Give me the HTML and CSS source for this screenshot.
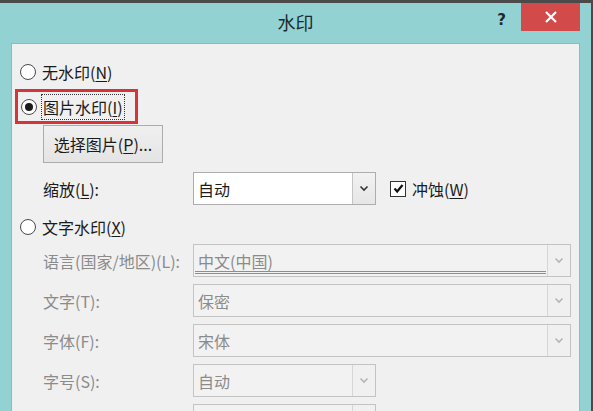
FILE: index.html
```html
<!DOCTYPE html>
<html lang="zh-CN">
<head>
<meta charset="utf-8">
<title>水印</title>
<link rel="stylesheet" href="styles.css">
</head>
<body>
<div class="screen">
  <div class="window">
    <div class="titlebar">
      <div class="spacer"></div>
      <div class="title">水印</div>
      <div class="controls">
        <span class="help">?</span>
        <span class="close">
          <svg width="14" height="14" viewBox="0 0 14 14"><path d="M2 2 L12 12 M12 2 L2 12" stroke="#fff" stroke-width="2.2" fill="none"/></svg>
        </span>
      </div>
    </div>
    <div class="content">
      <div class="radio-row first">
        <span class="radio"></span>
        <span class="label">无水印(<u>N</u>)</span>
      </div>
      <div class="highlight">
        <span class="radio checked"></span>
        <span class="label focus">图片水印(<u>I</u>)</span>
      </div>
      <div class="btn">选择图片(<u>P</u>)...</div>
      <div class="field scale">
        <span class="flabel">缩放(<u>L</u>):</span>
        <div class="combo short">
          <span class="value">自动</span>
          <span class="arrow"><svg width="10" height="7" viewBox="0 0 10 7"><path d="M1.5 1.5 L5 5 L8.5 1.5" stroke="#333" stroke-width="1.6" fill="none"/></svg></span>
        </div>
        <div class="check">
          <span class="box"><svg width="13" height="13" viewBox="0 0 13 13"><path d="M2.5 6.5 L5.2 9.5 L10.5 3" stroke="#111" stroke-width="2.2" fill="none"/></svg></span>
          <span class="label">冲蚀(<u>W</u>)</span>
        </div>
      </div>
      <div class="radio-row third">
        <span class="radio"></span>
        <span class="label">文字水印(<u>X</u>)</span>
      </div>
      <div class="field dis lang">
        <span class="flabel">语言(国家/地区)(L):</span>
        <div class="combo long">
          <span class="value">中文(中国)<span class="dline"></span></span>
          <span class="arrow"><svg width="10" height="7" viewBox="0 0 10 7"><path d="M1.5 1.5 L5 5 L8.5 1.5" stroke="#b5b5b5" stroke-width="1.6" fill="none"/></svg></span>
        </div>
      </div>
      <div class="field dis">
        <span class="flabel">文字(T):</span>
        <div class="combo long">
          <span class="value">保密</span>
          <span class="arrow"><svg width="10" height="7" viewBox="0 0 10 7"><path d="M1.5 1.5 L5 5 L8.5 1.5" stroke="#b5b5b5" stroke-width="1.6" fill="none"/></svg></span>
        </div>
      </div>
      <div class="field dis">
        <span class="flabel">字体(F):</span>
        <div class="combo long">
          <span class="value">宋体</span>
          <span class="arrow"><svg width="10" height="7" viewBox="0 0 10 7"><path d="M1.5 1.5 L5 5 L8.5 1.5" stroke="#b5b5b5" stroke-width="1.6" fill="none"/></svg></span>
        </div>
      </div>
      <div class="field dis">
        <span class="flabel">字号(S):</span>
        <div class="combo short">
          <span class="value">自动</span>
          <span class="arrow"><svg width="10" height="7" viewBox="0 0 10 7"><path d="M1.5 1.5 L5 5 L8.5 1.5" stroke="#b5b5b5" stroke-width="1.6" fill="none"/></svg></span>
        </div>
      </div>
      <div class="field dis">
        <span class="flabel"></span>
        <div class="combo short">
          <span class="value"></span>
          <span class="arrow"></span>
        </div>
      </div>
    </div>
  </div>
</div>
</body>
</html>
```
FILE: styles.css
```css
* { box-sizing: border-box; }
html, body {
  margin: 0;
  padding: 0;
  width: 593px;
  height: 411px;
  overflow: hidden;
  background: #4a4a4a;
  font-family: "Noto Sans CJK SC", "Noto Sans", sans-serif;
  font-size: 16px;
  color: #1b1b1b;
}
u { text-decoration: underline; text-underline-offset: 2px; text-decoration-thickness: 1px; }

.screen {
  height: 411px;
  padding: 3px 2px 0 0;
}
.window {
  height: 408px;
  background: #92d2d3;
  padding: 0 11px;
  display: flex;
  flex-direction: column;
}
.titlebar {
  height: 40px;
  flex: none;
  display: grid;
  grid-template-columns: 1fr auto 1fr;
  align-items: start;
}
.title {
  font-size: 18px;
  line-height: 20px;
  margin-top: 9px;
  color: #1c2a2a;
}
.controls {
  display: flex;
  justify-content: flex-end;
  align-items: flex-start;
}
.help {
  font-family: "DejaVu Sans", sans-serif;
  font-weight: bold;
  font-size: 15px;
  line-height: 16px;
  margin-top: 9px;
  margin-right: 15px;
  color: #1e2a2a;
}
.close {
  width: 59px;
  height: 28px;
  background: #d24a4a;
  display: flex;
  align-items: center;
  justify-content: center;
}
.content {
  flex: 1;
  background: #f0f0f0;
  border: 1px solid #7fc0c1;
  border-bottom: none;
  padding-left: 8px;
  overflow: hidden;
}

.radio-row {
  height: 24px;
  display: flex;
  align-items: center;
}
.radio-row.first { margin-top: 16px; }
.radio-row.third { margin-top: 10px; }
.radio {
  width: 16px;
  height: 16px;
  border: 1px solid #4a4a4a;
  border-radius: 50%;
  background: #fff;
  flex: none;
  display: flex;
  align-items: center;
  justify-content: center;
}
.radio.checked::after {
  content: "";
  width: 8px;
  height: 8px;
  border-radius: 50%;
  background: #1a1a1a;
}
.radio-row .label { margin-left: 6px; line-height: 20px; }

.highlight {
  margin-top: 5px;
  margin-left: -5px;
  width: 123px;
  height: 35px;
  border: 3px solid #d7343a;
  padding-left: 3px;
  display: flex;
  align-items: center;
}
.highlight .label.focus {
  margin-left: 4px;
  border: 1px dotted #333;
  padding: 2px 1px;
  line-height: 20px;
  white-space: nowrap;
}

.btn {
  margin-top: 1px;
  margin-left: 23px;
  width: 120px;
  height: 38px;
  border: 1px solid #acacac;
  background: linear-gradient(#f0f0f0, #e4e4e4);
  display: flex;
  align-items: center;
  justify-content: center;
  line-height: 20px;
}

.field {
  margin-left: 23px;
  height: 33px;
  display: grid;
  grid-template-columns: 150px auto 1fr;
  align-items: center;
  margin-top: 7px;
}
.field.scale { margin-top: 9px; }
.field.lang { margin-top: 5px; }
.flabel { line-height: 20px; white-space: nowrap; }

.combo {
  height: 33px;
  display: flex;
  border: 1px solid #adadad;
  background: #fff;
}
.combo.short { width: 183px; }
.combo.long { width: 378px; }
.combo .value {
  flex: 1;
  padding-left: 4px;
  display: flex;
  align-items: center;
  line-height: 20px;
  position: relative;
}
.combo .arrow {
  width: 23px;
  flex: none;
  border-left: 1px solid #c4c4c4;
  background: linear-gradient(#f2f2f2, #e6e6e6);
  display: flex;
  align-items: center;
  justify-content: center;
}

.field.dis { color: #8b8b8b; }
.field.dis .combo {
  background: #f2f2f2;
  border-color: #c3c3c3;
}
.field.dis .combo .arrow {
  background: #f0f0f0;
  border-left-color: #d6d6d6;
}
.dline {
  position: absolute;
  left: 1px;
  right: 1px;
  bottom: 2px;
  height: 3px;
  border-top: 1px solid #8e8e8e;
  border-bottom: 1px solid #8e8e8e;
}

.check {
  display: flex;
  align-items: center;
  margin-left: 14px;
}
.check .box {
  width: 16px;
  height: 16px;
  border: 1px solid #333;
  background: #fff;
  display: flex;
  align-items: center;
  justify-content: center;
}
.check .label { margin-left: 6px; line-height: 20px; }
```
